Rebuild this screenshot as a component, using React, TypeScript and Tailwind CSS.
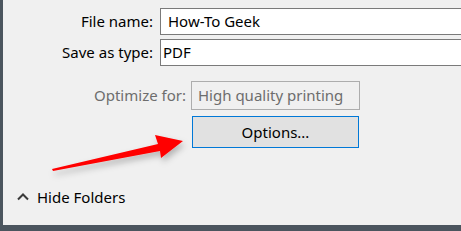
function Arrow() {
  return (
    <svg className="pointer-events-none absolute left-0 top-0" width="461" height="231" viewBox="0 0 461 231">
      <defs>
        <filter id="arrowShadow" x="-20%" y="-50%" width="140%" height="200%">
          <feDropShadow dx="2" dy="4" stdDeviation="3" floodColor="#000" floodOpacity="0.25" />
        </filter>
      </defs>
      <polygon
        points="52,169 158,144 155,135 183,141 161,158 160,151 53,171"
        fill="#ff0000"
        filter="url(#arrowShadow)"
      />
    </svg>
  );
}

export default function App() {
  return (
    <div
      className="relative h-[231px] w-[461px] overflow-hidden bg-[#4b555e]"
      style={{ fontFamily: '"Noto Sans", "Open Sans", sans-serif' }}
    >
      <div className="flex h-[225px] flex-col border-l-[3px] border-[#4b555e] bg-[#f0f0f0] pt-[8px] text-[15px] text-black">
        {/* File name */}
        <div className="flex items-center">
          <label className="w-[150px] shrink-0 text-right leading-none">File name:</label>
          <div className="ml-[7px] flex h-[27px] min-w-[320px] items-center border border-[#7a7a7a] bg-white pl-[7px]">
            How-To Geek
          </div>
        </div>

        {/* Save as type */}
        <div className="mt-[4px] flex items-center">
          <label className="w-[150px] shrink-0 text-right leading-none">Save as type:</label>
          <div className="ml-[7px] flex h-[27px] min-w-[320px] items-center border border-[#7a7a7a] bg-white pl-[2px]">
            PDF
          </div>
        </div>

        {/* Optimize for */}
        <div className="mt-[15px] flex items-center text-[#6d6d6d]">
          <label className="w-[183px] shrink-0 text-right leading-none">Optimize for:</label>
          <div className="ml-[5px] flex h-[29px] w-[169px] items-center border border-[#adadad] pl-[6px]">
            High quality printing
          </div>
        </div>

        <button className="ml-[189px] mt-[6px] flex h-[32px] w-[167px] items-center justify-center border border-[#0078d7] bg-[#e1e1e1] text-black">
          Options...
        </button>

        {/* Hide Folders */}
        <div className="mt-[38px] flex items-center">
          <svg className="ml-[14px]" width="12" height="8" viewBox="0 0 12 8">
            <polyline points="1,6.5 6,1.5 11,6.5" fill="none" stroke="#3a3a3a" strokeWidth="2" />
          </svg>
          <span className="ml-[8px]">Hide Folders</span>
        </div>
      </div>
      <Arrow />
    </div>
  );
}
